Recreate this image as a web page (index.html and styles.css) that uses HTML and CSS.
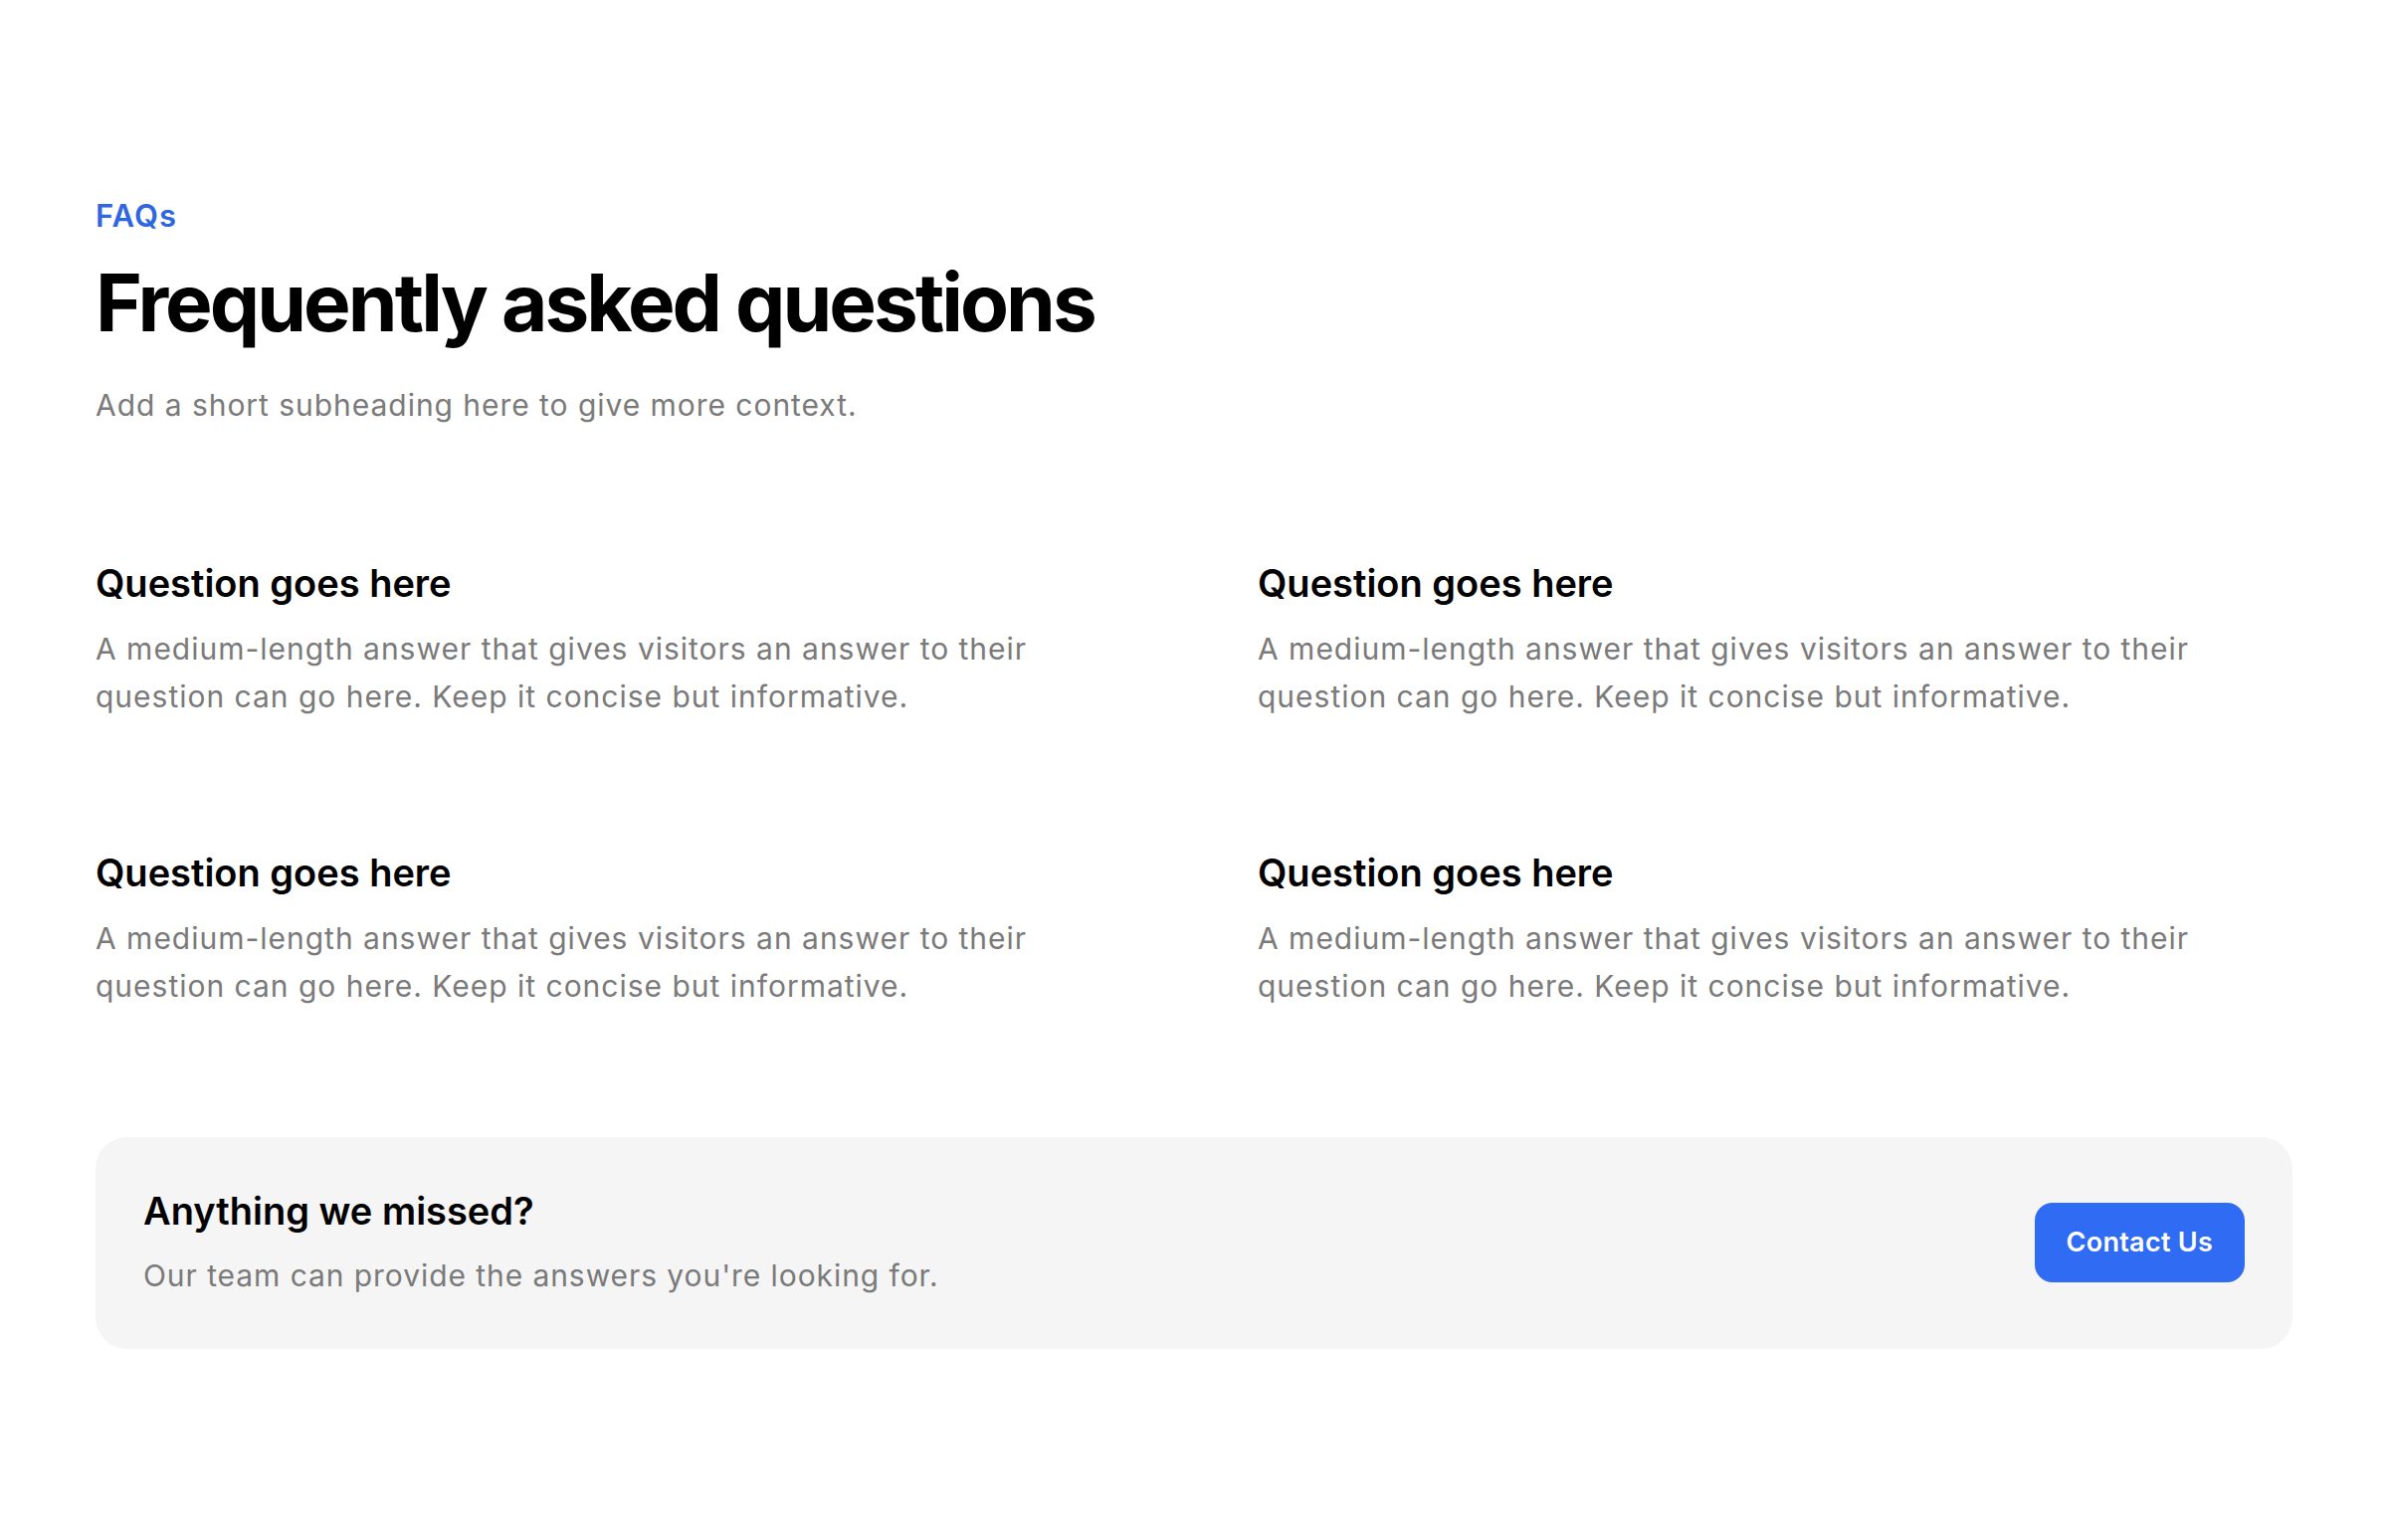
FILE: index.html
```html
<!DOCTYPE html>
<html lang="en">
<head>
<meta charset="utf-8">
<title>FAQs</title>
<link rel="stylesheet" href="styles.css">
</head>
<body>
<main class="faq">
  <header class="faq-head">
    <p class="eyebrow">FAQs</p>
    <h1 class="title">Frequently asked questions</h1>
    <p class="subtitle">Add a short subheading here to give more context.</p>
  </header>
  <section class="faq-grid">
    <div class="item">
      <h3 class="q">Question goes here</h3>
      <p class="a">A medium-length answer that gives visitors an answer to their question can go here. Keep it concise but informative.</p>
    </div>
    <div class="item">
      <h3 class="q">Question goes here</h3>
      <p class="a">A medium-length answer that gives visitors an answer to their question can go here. Keep it concise but informative.</p>
    </div>
    <div class="item">
      <h3 class="q">Question goes here</h3>
      <p class="a">A medium-length answer that gives visitors an answer to their question can go here. Keep it concise but informative.</p>
    </div>
    <div class="item">
      <h3 class="q">Question goes here</h3>
      <p class="a">A medium-length answer that gives visitors an answer to their question can go here. Keep it concise but informative.</p>
    </div>
  </section>
  <aside class="cta">
    <div class="cta-text">
      <h2 class="cta-title">Anything we missed?</h2>
      <p class="cta-sub">Our team can provide the answers you're looking for.</p>
    </div>
    <a class="btn" href="#">Contact Us</a>
  </aside>
</main>
</body>
</html>
```

FILE: styles.css
```css
* { box-sizing: border-box; }
html, body { margin: 0; padding: 0; background: #ffffff; }
body {
  font-family: Inter, "Noto Sans", "Liberation Sans", sans-serif;
  color: #0a0a0a;
}
.faq {
  padding: 194px 96px 120px;
}
.eyebrow {
  margin: 0;
  font-size: 31px;
  line-height: 45px;
  font-weight: 600;
  letter-spacing: 0.035em;
  color: #2f67e2;
}
.title {
  margin: 17px 0 0;
  font-size: 80px;
  line-height: 96px;
  font-weight: 700;
  letter-spacing: -0.037em;
  color: #000;
}
.subtitle {
  margin: 33px 0 0;
  font-size: 30px;
  line-height: 45px;
  font-weight: 400;
  letter-spacing: 0.032em;
  color: #7a7a7a;
}
.faq-grid {
  margin-top: 133px;
  display: grid;
  grid-template-columns: 1fr 1fr;
  column-gap: 128px;
  row-gap: 130px;
}
.q {
  margin: 0;
  font-size: 38px;
  line-height: 47px;
  font-weight: 600;
  letter-spacing: 0;
  color: #000;
}
.a {
  margin: 18px 0 0;
  font-size: 30px;
  line-height: 48px;
  letter-spacing: 0.033em;
  color: #7a7a7a;
}
.cta {
  margin-top: 128px;
  background: #f5f5f5;
  border-radius: 32px;
  padding: 50px 48px 51px;
  display: flex;
  align-items: center;
  justify-content: space-between;
}
.cta-title {
  margin: 0;
  font-size: 38px;
  line-height: 48px;
  font-weight: 600;
  letter-spacing: 0;
  color: #000;
}
.cta-sub {
  margin: 19px 0 0;
  font-size: 30px;
  line-height: 45px;
  letter-spacing: 0.031em;
  color: #7a7a7a;
}
.btn {
  display: inline-block;
  background: #2f6bf3;
  color: #fff;
  text-decoration: none;
  font-size: 27px;
  line-height: 80px;
  font-weight: 600;
  letter-spacing: 0.01em;
  padding: 0 32px;
  border-radius: 18px;
}
```
